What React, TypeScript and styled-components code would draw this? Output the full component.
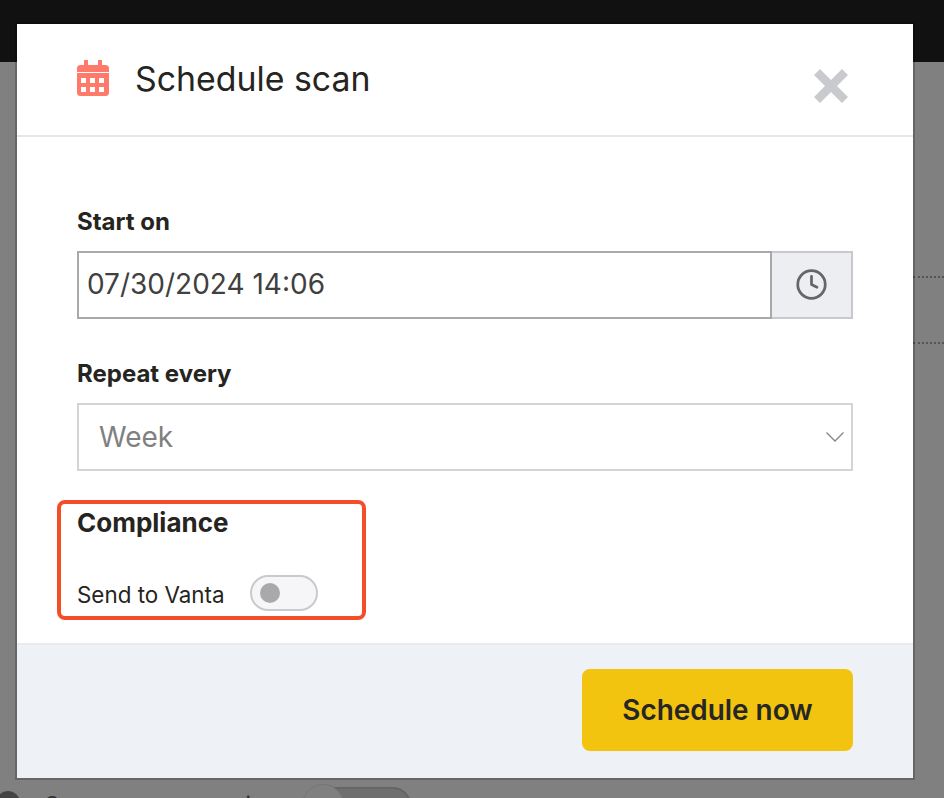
import * as React from 'react';
import styled, { createGlobalStyle } from 'styled-components';
import { Clock } from 'lucide-react';

const GlobalStyle = createGlobalStyle`
  html, body {
    margin: 0;
    height: 100%;
    overflow: hidden;
    background: #808080;
    font-family: Inter, "Liberation Sans", sans-serif;
  }
  * {
    box-sizing: border-box;
  }
`;

const Page = styled.div`
  position: relative;
  height: 798px;
  overflow: hidden;
  display: flex;
  flex-direction: column;
  background: #808080;
`;

const TopBar = styled.div`
  height: 62px;
  flex: none;
  background: #111111;
`;

const Backdrop = styled.div`
  flex: 1;
  display: flex;
  flex-direction: column;
  overflow: hidden;
`;

const RuleStack = styled.div`
  flex: none;
  margin: 214px 0 0 auto;
  width: 31px;
  height: 68px;
  border-top: 2px dotted #555555;
  border-bottom: 2px dotted #555555;
`;

const BehindRow = styled.div`
  flex: none;
  margin-top: 440px;
  display: flex;
  align-items: flex-start;
`;

const BehindDot = styled.div`
  flex: none;
  width: 24px;
  height: 24px;
  margin: 7px 0 0 -4px;
  border-radius: 50%;
  background: #444444;
`;

const BehindLabel = styled.div`
  margin: 7px 0 0 25px;
  width: 259px;
  font-size: 22px;
  line-height: 26px;
  color: #333333;
  white-space: nowrap;
`;

const BehindToggle = styled.div`
  position: relative;
  flex: none;
  width: 107px;
  height: 36px;
  margin-top: 3px;
  border-radius: 18px;
  background: #6f6f6f;
  border: 2px solid #666666;
`;

const BehindThumb = styled.div`
  position: absolute;
  left: -4px;
  top: -5px;
  width: 42px;
  height: 42px;
  border-radius: 50%;
  background: #808080;
  border: 1px solid #757575;
`;

const Modal = styled.div`
  position: absolute;
  left: 17px;
  top: 24px;
  width: 896px;
  height: 754px;
  display: flex;
  flex-direction: column;
  background: #ffffff;
  box-shadow: 0 0 0 2px rgba(0, 0, 0, 0.2);
`;

const Header = styled.header`
  flex: none;
  height: 113px;
  display: flex;
  align-items: flex-start;
  padding: 36px 65px 0 60px;
  border-bottom: 2px solid #e6e6e6;
`;

const TitleIcon = styled.svg`
  flex: none;
  width: 32px;
  height: 36px;
  fill: #ff7a6b;
`;

const Title = styled.h1`
  flex: 1;
  margin: -2px 0 0 26px;
  font-size: 33.85px;
  line-height: 42px;
  font-weight: 400;
  color: #26241e;
`;

const CloseIcon = styled.svg`
  flex: none;
  width: 34px;
  height: 34px;
  margin-top: 9px;
  fill: #c9cacd;
`;

const Body = styled.div`
  flex: 1;
  display: flex;
  flex-direction: column;
  padding: 0 60px;
`;

const FieldLabel = styled.label`
  display: block;
  margin-top: ${p => p.$top}px;
  font-size: 24px;
  line-height: 28px;
  font-weight: 700;
  color: #26241e;
`;

const InputGroup = styled.div`
  display: flex;
  height: 68px;
  margin-top: 15px;
`;

const DateInput = styled.div`
  flex: 1;
  display: flex;
  align-items: center;
  padding: 0 0 2px 8px;
  border: 2px solid #a9a9a9;
  font-size: 28px;
  color: #404040;
`;

const ClockAddon = styled.div`
  flex: none;
  width: 81px;
  display: flex;
  align-items: center;
  justify-content: center;
  padding-bottom: 2px;
  background: #eceef1;
  color: #666666;
  border: 2px solid #c8c9cc;
  border-left: 0;
`;

const SelectBox = styled.div`
  height: 68px;
  margin-top: 15px;
  display: flex;
  align-items: center;
  justify-content: space-between;
  padding: 0 7px 0 20px;
  border: 2px solid #d4d4d4;
  font-size: 28px;
  color: #808080;
`;

const Chevron = styled.svg`
  width: 18px;
  height: 10px;
  fill: none;
  stroke: #858585;
  stroke-width: 1.3;
`;

const Highlight = styled.section`
  width: 309px;
  height: 120px;
  margin: 29px 0 0 -20px;
  padding: 4px 0 0 16px;
  border: 4px solid #f44d27;
  border-radius: 8px;
`;

const SectionTitle = styled.h2`
  margin: 0;
  font-size: 26px;
  line-height: 30px;
  font-weight: 700;
  color: #26241e;
`;

const ToggleRow = styled.div`
  display: flex;
  align-items: center;
  margin-top: 37px;
  gap: 25px;
`;

const ToggleLabel = styled.span`
  margin-top: 3px;
  font-size: 22.4px;
  color: #26241e;
`;

const Toggle = styled.div`
  flex: none;
  width: 68px;
  height: 36px;
  display: flex;
  align-items: center;
  padding-left: 8px;
  border: 2px solid #c9cacd;
  border-radius: 18px;
  background: #f6f6f8;
`;

const ToggleThumb = styled.div`
  width: 20px;
  height: 20px;
  border-radius: 50%;
  background: #a9a9ab;
`;

const Footer = styled.footer`
  flex: none;
  height: 135px;
  display: flex;
  justify-content: flex-end;
  padding: 24px 60px 0 0;
  background: #eef1f6;
  border-top: 2px solid #e9ebf0;
`;

const PrimaryButton = styled.button`
  width: 271px;
  height: 82px;
  padding: 0;
  border: 0;
  border-radius: 8px;
  background: #f2c40f;
  color: #262626;
  font-family: inherit;
  font-size: 27.9px;
  font-weight: 600;
`;

export default function App() {
  return (
    <Page>
      <GlobalStyle />
      <TopBar />
      <Backdrop>
        <RuleStack />
        <BehindRow>
          <BehindDot />
          <BehindLabel>Scan common services</BehindLabel>
          <BehindToggle>
            <BehindThumb />
          </BehindToggle>
        </BehindRow>
      </Backdrop>
      <Modal>
        <Header>
          <TitleIcon viewBox="0 0 32 36">
            <path d="M7 0h4v5h10V0h4v5h3.5A3.5 3.5 0 0 1 32 8.5V12H0V8.5A3.5 3.5 0 0 1 3.5 5H7z" />
            <path
              fillRule="evenodd"
              d="M0 13h32v19.5a3.5 3.5 0 0 1-3.5 3.5h-25A3.5 3.5 0 0 1 0 32.500zM4 18v5h5v-5zM13 18v5h5v-5zM22 18v5h5v-5zM4 27v5h5v-5zM13 27v5h5v-5zM22 27v5h5v-5z"
            />
          </TitleIcon>
          <Title>Schedule scan</Title>
          <CloseIcon viewBox="0 0 34 34">
            <path d="M6 0l11 11L28 0l6 6-11 11 11 11-6 6-11-11L6 34l-6-6 11-11L0 6z" />
          </CloseIcon>
        </Header>
        <Body>
          <FieldLabel $top={71}>Start on</FieldLabel>
          <InputGroup>
            <DateInput>07/30/2024 14:06</DateInput>
            <ClockAddon>
              <Clock size={33} strokeWidth={2} />
            </ClockAddon>
          </InputGroup>
          <FieldLabel $top={41}>Repeat every</FieldLabel>
          <SelectBox>
            Week
            <Chevron viewBox="0 0 18 10">
              <path d="M0.500 0.500L9 9L17.500 0.500" />
            </Chevron>
          </SelectBox>
          <Highlight>
            <SectionTitle>Compliance</SectionTitle>
            <ToggleRow>
              <ToggleLabel>Send to Vanta</ToggleLabel>
              <Toggle>
                <ToggleThumb />
              </Toggle>
            </ToggleRow>
          </Highlight>
        </Body>
        <Footer>
          <PrimaryButton>Schedule now</PrimaryButton>
        </Footer>
      </Modal>
    </Page>
  );
}
